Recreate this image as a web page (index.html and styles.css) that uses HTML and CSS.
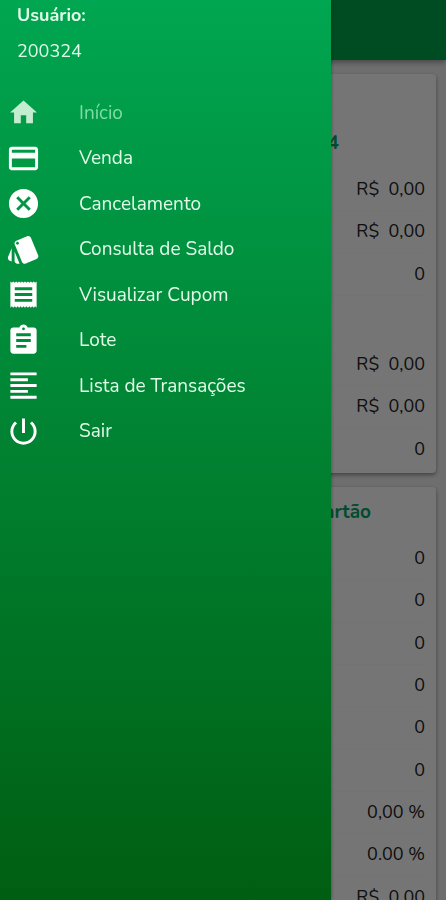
FILE: index.html
```
<!DOCTYPE html>
<html lang="pt-BR">

<head>
    <meta charset="utf-8">
    <meta name="viewport" content="width=device-width, initial-scale=1">
    <title>Início</title>
    <link rel="stylesheet" href="styles.css">
</head>

<body>
    <header class="topbar"></header>

    <main class="content">
        <section class="card card-summary">
            <h2 class="card-title">4</h2>
            <ul class="values">
                <li>R$&nbsp; 0,00</li>
                <li>R$&nbsp; 0,00</li>
                <li>0</li>
            </ul>
            <ul class="values">
                <li>R$&nbsp; 0,00</li>
                <li>R$&nbsp; 0,00</li>
                <li>0</li>
            </ul>
        </section>

        <section class="card card-types">
            <h2 class="card-title">Cartão</h2>
            <ul class="values">
                <li>0</li>
                <li>0</li>
                <li>0</li>
                <li>0</li>
                <li>0</li>
                <li>0</li>
                <li>0,00 %</li>
                <li>0.00 %</li>
                <li>R$&nbsp; 0,00</li>
            </ul>
        </section>
    </main>

    <div class="backdrop"></div>

    <aside class="drawer">
        <div class="user">
            <strong>Usuário:</strong>
            <span>200324</span>
        </div>
        <nav class="menu">
            <a class="active" href="#inicio">
                <svg class="icon" viewBox="-1 -1 26 26"><path d="M10 20v-6h4v6h5v-8h3L12 3 2 12h3v8z"/></svg>
                Início
            </a>
            <a href="#venda">
                <svg class="icon" viewBox="0 0 24 24"><path d="M20 4H4c-1.11 0-2 .89-2 2v12c0 1.11.89 2 2 2h16c1.11 0 2-.89 2-2V6c0-1.11-.89-2-2-2zm0 14H4v-6h16v6zm0-10H4V6h16v2z"/></svg>
                Venda
            </a>
            <a href="#cancelamento">
                <svg class="icon" viewBox="0 0 24 24"><path d="M12 2C6.47 2 2 6.47 2 12s4.47 10 10 10 10-4.47 10-10S17.53 2 12 2zm5 13.59L15.59 17 12 13.41 8.41 17 7 15.59 10.59 12 7 8.41 8.41 7 12 10.59 15.59 7 17 8.41 13.41 12 17 15.59z"/></svg>
                Cancelamento
            </a>
            <a href="#saldo">
                <svg class="icon" viewBox="0 0 24 24"><path d="M2.53 19.65l1.34.56v-9.03l-2.43 5.86c-.41 1.02.08 2.19 1.09 2.61zm19.5-3.7L17.07 3.98c-.31-.75-1.04-1.21-1.81-1.23-.26 0-.53.04-.79.15L7.1 5.95c-.75.31-1.21 1.03-1.23 1.8-.01.27.04.54.15.8l4.96 11.97c.31.76 1.05 1.22 1.83 1.23.26 0 .52-.05.77-.15l7.36-3.05c1.02-.42 1.51-1.59 1.09-2.6zM7.88 8.75c-.55 0-1-.45-1-1s.45-1 1-1 1 .45 1 1-.45 1-1 1zm-2 11c0 1.1.9 2 2 2h1.45l-3.45-8.34v6.34z"/></svg>
                Consulta de Saldo
            </a>
            <a href="#cupom">
                <svg class="icon" viewBox="0 0 24 24"><path d="M18 17H6v-2h12v2zm0-4H6v-2h12v2zm0-4H6V7h12v2zM3 21l1-1 1 1 1-1 1 1 1-1 1 1 1-1 1 1 1-1 1 1 1-1 1 1 1-1 1 1 1-1 1 1 1-1 1 1V3l-1 1-1-1-1 1-1-1-1 1-1-1-1 1-1-1-1 1-1-1-1 1-1-1-1 1-1-1-1 1-1-1-1 1-1-1z"/></svg>
                Visualizar Cupom
            </a>
            <a href="#lote">
                <svg class="icon" viewBox="0 0 24 24"><path d="M19 3h-4.18C14.4 1.84 13.3 1 12 1c-1.3 0-2.4.84-2.82 2H5c-1.1 0-2 .9-2 2v14c0 1.1.9 2 2 2h14c1.1 0 2-.9 2-2V5c0-1.1-.9-2-2-2zm-7 0c.55 0 1 .45 1 1s-.45 1-1 1-1-.45-1-1 .45-1 1-1zm2 14H7v-2h7v2zm3-4H7v-2h10v2zm0-4H7V7h10v2z"/></svg>
                Lote
            </a>
            <a href="#transacoes">
                <svg class="icon" viewBox="0 0 24 24"><path d="M15 15H3v2h12v-2zm0-8H3v2h12V7zM3 13h18v-2H3v2zm0 8h18v-2H3v2zM3 3v2h18V3H3z"/></svg>
                Lista de Transações
            </a>
            <a href="#sair">
                <svg class="icon" viewBox="0 0 24 24"><path d="M13 3h-2v10h2V3zm4.83 2.17l-1.42 1.42C17.99 7.86 19 9.81 19 12c0 3.87-3.13 7-7 7s-7-3.13-7-7c0-2.19 1.01-4.14 2.58-5.42L6.17 5.17C4.23 6.82 3 9.26 3 12c0 4.97 4.03 9 9 9s9-4.03 9-9c0-2.74-1.23-5.18-3.17-6.83z"/></svg>
                Sair
            </a>
        </nav>
    </aside>
</body>

</html>
```
FILE: styles.css
```
* {
    box-sizing: border-box;
}

body {
    margin: 0;
    height: 100vh;
    overflow: hidden;
    background: #f0f0f0;
    color: #222;
    font-family: Nunito, "Noto Sans", sans-serif;
    font-size: 18px;
}

.topbar {
    height: 60px;
    background: #00a64a;
    box-shadow: 0 2px 6px rgba(0, 0, 0, 0.4);
}

.content {
    display: flex;
    flex-direction: column;
    gap: 14px;
    padding: 14px 10px;
}

.card {
    background: #fff;
    border-radius: 4px;
    box-shadow: 0 2px 4px rgba(0, 0, 0, 0.4);
}

.card-summary {
    display: flex;
    flex-direction: column;
    padding: 44px 0 2px;
}

.card-summary .values + .values {
    margin-top: 48px;
}

.card-title {
    margin: 0 0 1px;
    color: #00a66a;
    font-size: 19px;
    line-height: 50px;
    text-align: right;
}

.card-summary .card-title {
    padding-right: 97px;
}

.card-types .card-title {
    padding-right: 65px;
}

.values {
    display: grid;
    grid-auto-rows: 1fr;
    height: 127px;
    margin: 0;
    padding: 0 11px;
    list-style: none;
    line-height: 41px;
    text-align: right;
}

.card-types .values {
    height: 381px;
}

.values li {
    border-bottom: 1px solid #fafafa;
}

.backdrop {
    position: fixed;
    inset: 0;
    background: rgba(0, 0, 0, 0.54);
}

.drawer {
    position: fixed;
    top: 0;
    bottom: 0;
    left: 0;
    width: 80%;
    max-width: 331px;
    background: linear-gradient(#00a651, #005e12);
    box-shadow: 0 0 4px rgba(0, 0, 0, 0.4);
    color: #e2fbe9;
}

.user {
    display: flex;
    flex-direction: column;
    gap: 12px;
    padding: 3px 17px 0;
    line-height: 24px;
}

.menu {
    display: grid;
    grid-auto-rows: 1fr;
    height: 364px;
    margin-top: 27px;
    font-size: 19px;
}

.menu a {
    display: flex;
    align-items: center;
    gap: 38px;
    padding-left: 6px;
    color: inherit;
    text-decoration: none;
}

.menu a.active {
    color: #7fdca4;
}

.icon {
    width: 35px;
    height: 35px;
    fill: #fff;
}

.active .icon {
    fill: #c4edcf;
}
```
